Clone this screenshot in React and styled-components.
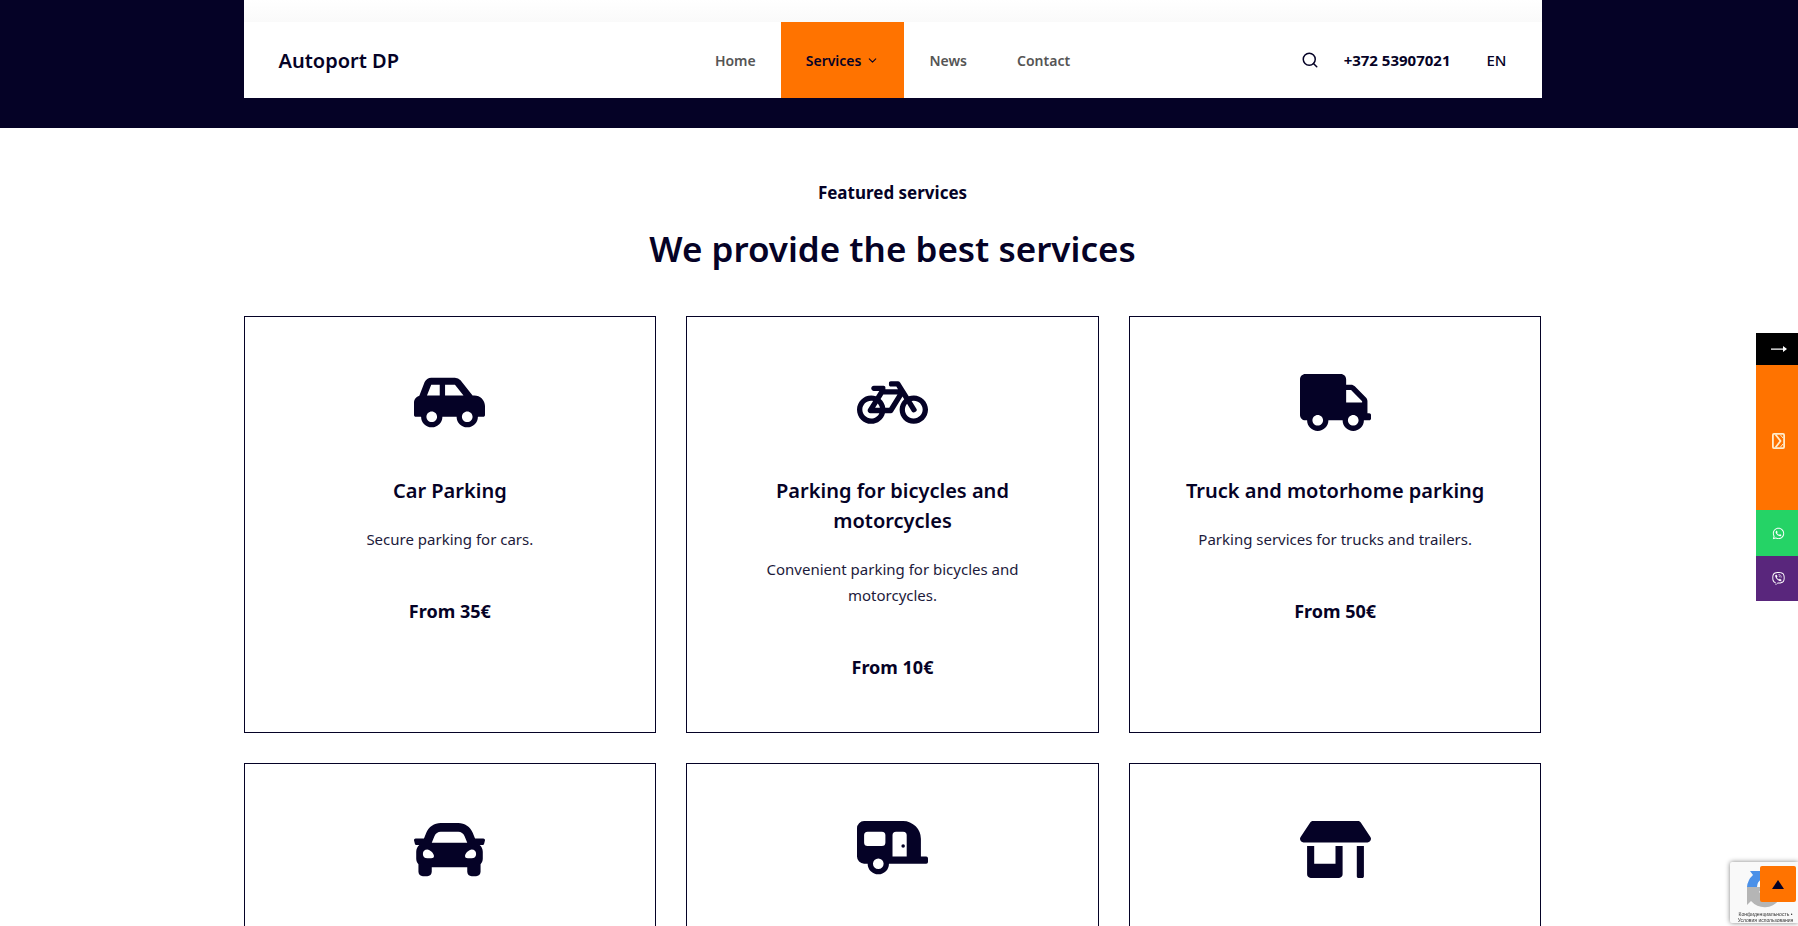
import React from "react";
import styled, { createGlobalStyle } from "styled-components";
import {
  FaCarSide,
  FaBicycle,
  FaTruck,
  FaCar,
  FaCaravan,
  FaStoreAlt,
  FaWhatsapp,
  FaViber,
} from "react-icons/fa";
import { FiSearch, FiChevronDown } from "react-icons/fi";

const GlobalStyle = createGlobalStyle`
  * {
    box-sizing: border-box;
  }
  body {
    margin: 0;
    background-color: #ffffff;
    color: #050226;
    font-family: "Noto Sans", "Open Sans", sans-serif;
    font-size: 15px;
  }
`;

const Page = styled.div`
  height: 100vh;
  overflow: hidden;
`;

const Hero = styled.header`
  padding: 0 13px 30px 0;
  background-color: #050226;
`;

const Container = styled.div`
  width: 100%;
  max-width: 1298px;
  margin: 0 auto;
`;

const HeaderBox = styled(Container)`
  background-color: #ffffff;
`;

const TopStrip = styled.div`
  height: 22px;
  background: linear-gradient(#ffffff, #fafafa);
`;

const Bar = styled.div`
  display: grid;
  grid-template-columns: 1fr auto 1fr;
  align-items: center;
  min-height: 76px;
  padding: 0 35px;
`;

const Logo = styled.a`
  color: #050226;
  font-size: 20px;
  font-weight: 600;
  text-decoration: none;
`;

const Nav = styled.nav`
  display: flex;
  align-self: stretch;
`;

const NavLink = styled.a`
  display: flex;
  align-items: center;
  gap: 5px;
  padding: 0 25px;
  background-color: ${(props) => (props.$active ? "#ff7300" : "transparent")};
  color: ${(props) => (props.$active ? "#050226" : "#555555")};
  font-size: 14px;
  font-weight: 600;
  text-decoration: none;
`;

const Tools = styled.div`
  display: flex;
  justify-content: flex-end;
  align-items: center;
`;

const SearchButton = styled.button`
  display: flex;
  margin-right: 25px;
  padding: 0;
  border: 0;
  background: none;
  color: #050226;
`;

const Phone = styled.a`
  margin-right: 36px;
  color: #050226;
  font-size: 15px;
  font-weight: 700;
  text-decoration: none;
`;

const Language = styled.a`
  color: #050226;
  font-weight: 500;
  text-decoration: none;
`;

const Main = styled.main`
  padding: 50px 13px 50px 0;
`;

const Eyebrow = styled.p`
  margin: 0;
  font-size: 17px;
  font-weight: 700;
  line-height: 30px;
  text-align: center;
`;

const Heading = styled.h2`
  margin: 16px 0 42px;
  font-size: 35px;
  font-weight: 600;
  line-height: 50px;
  text-align: center;
`;

const Services = styled(Container)`
  display: grid;
  grid-template-columns: repeat(3, 1fr);
  gap: 30px;
`;

const Card = styled.article`
  min-height: 417px;
  padding: 50px;
  border: 1px solid #050226;
  text-align: center;

  > svg {
    display: block;
    margin: 0 auto;
  }
`;

const CardTitle = styled.h3`
  margin: 38px 0 20px;
  font-size: 20px;
  font-weight: 600;
  line-height: 30px;
`;

const CardText = styled.p`
  margin: 0 0 44px;
  color: #1c1a3b;
  font-size: 15px;
  line-height: 26px;
`;

const Price = styled.p`
  margin: 0;
  font-size: 18px;
  font-weight: 700;
  line-height: 30px;
`;

const ContactStrip = styled.aside`
  position: fixed;
  top: 333px;
  right: 0;
  display: flex;
  flex-direction: column;
  width: 42px;
`;

const StripButton = styled.button`
  display: flex;
  justify-content: center;
  align-items: center;
  height: ${(props) => props.$height};
  padding: 0 0 0 3px;
  border: 0;
  background-color: ${(props) => props.$color};
  color: #ffffff;
`;

const Captcha = styled.div`
  position: fixed;
  right: 0;
  bottom: 3px;
  width: 68px;
  height: 61px;
  padding-top: 6px;
  overflow: hidden;
  border-radius: 2px 0 0 2px;
  background-color: #f9f9f9;
  box-shadow: 0 0 5px #808080;

  svg {
    display: block;
    margin: 0 auto 3px 15px;
  }
`;

const CaptchaText = styled.div`
  padding-left: 3px;
  color: #333333;
  font-family: "Liberation Sans", sans-serif;
  font-size: 5px;
  line-height: 6px;
  text-align: center;
  white-space: nowrap;
`;

const BackToTop = styled.button`
  position: fixed;
  right: 2px;
  bottom: 24px;
  display: flex;
  justify-content: center;
  align-items: center;
  width: 36px;
  height: 36px;
  padding: 0;
  border: 0;
  border-radius: 2px;
  background-color: #ff7300;
`;

const services = [
  { icon: FaCarSide, title: "Car Parking", text: "Secure parking for cars.", price: "From 35€" },
  {
    icon: FaBicycle,
    title: "Parking for bicycles and motorcycles",
    text: "Convenient parking for bicycles and motorcycles.",
    price: "From 10€",
  },
  {
    icon: FaTruck,
    title: "Truck and motorhome parking",
    text: "Parking services for trucks and trailers.",
    price: "From 50€",
  },
  { icon: FaCar },
  { icon: FaCaravan },
  { icon: FaStoreAlt },
];

const ServiceCard = ({ icon: Icon, title, text, price }) => {
  return (
    <Card>
      <Icon size={71} />
      {title && <CardTitle>{title}</CardTitle>}
      {text && <CardText>{text}</CardText>}
      {price && <Price>{price}</Price>}
    </Card>
  );
};

const App = () => {
  return (
    <Page>
      <GlobalStyle />
      <Hero>
        <HeaderBox>
          <TopStrip />
          <Bar>
            <Logo href="#">Autoport DP</Logo>
            <Nav>
              <NavLink href="#">Home</NavLink>
              <NavLink href="#" $active>
                Services
                <FiChevronDown size={13} />
              </NavLink>
              <NavLink href="#">News</NavLink>
              <NavLink href="#">Contact</NavLink>
            </Nav>
            <Tools>
              <SearchButton aria-label="Search">
                <FiSearch size={18} />
              </SearchButton>
              <Phone href="tel:+37253907021">+372 53907021</Phone>
              <Language href="#">EN</Language>
            </Tools>
          </Bar>
        </HeaderBox>
      </Hero>
      <Main>
        <Eyebrow>Featured services</Eyebrow>
        <Heading>We provide the best services</Heading>
        <Services>
          {services.map((service, index) => (
            <ServiceCard key={index} {...service} />
          ))}
        </Services>
      </Main>
      <ContactStrip>
        <StripButton $height="32px" $color="#000000" aria-label="Hide">
          <svg width="16" height="6" viewBox="0 0 16 6" fill="currentColor">
            <path d="M0 2.4h12V0l4 3l-4 3V3.8H0z" />
          </svg>
        </StripButton>
        <StripButton $height="145px" $color="#ff7300" aria-label="Contact form">
          <svg width="13" height="22" viewBox="0 0 13 22" fill="none" stroke="#ffeccb" strokeWidth="1.8">
            <rect x="0.9" y="6.9" width="11.2" height="14.2" rx="1" />
            <path d="M3.5 7.5L8.5 14L3.5 20.5" />
            <path d="M8.5 8l2.5 3M8.5 20l2.5-3" strokeWidth="1" />
          </svg>
        </StripButton>
        <StripButton $height="46px" $color="#25d366" aria-label="WhatsApp">
          <FaWhatsapp size={13} />
        </StripButton>
        <StripButton $height="45px" $color="#59267c" aria-label="Viber">
          <FaViber size={13} />
        </StripButton>
      </ContactStrip>
      <Captcha>
        <svg width="40" height="40" viewBox="0 0 40 40">
          <path d="M2 19a18 18 0 0 1 6-12L5 3h16v11l-4-3a9 9 0 0 0-5 8z" fill="#4a90e8" />
          <path d="M2 19v18l4-4a18 18 0 0 0 28-1l-7-7a9 9 0 0 1-13-1l4-5z" fill="#b5b5b5" />
        </svg>
        <CaptchaText>Конфиденциальность •</CaptchaText>
        <CaptchaText>Условия использования</CaptchaText>
      </Captcha>
      <BackToTop aria-label="Back to top">
        <svg width="12" height="9" viewBox="0 0 12 9">
          <path d="M6 0l6 9H0z" fill="#050226" />
        </svg>
      </BackToTop>
    </Page>
  );
};

export default App;
